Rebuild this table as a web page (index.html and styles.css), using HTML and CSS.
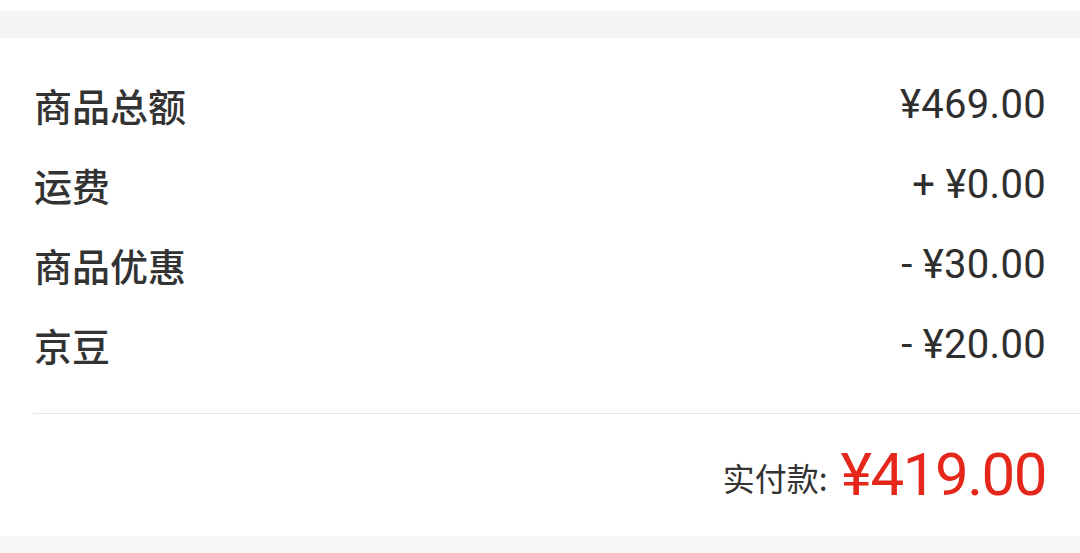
FILE: index.html
```html
<!DOCTYPE html>
<html lang="zh">
<head>
<meta charset="utf-8">
<link rel="stylesheet" href="styles.css">
</head>
<body>
<div class="top-gap"></div>
<div class="band"></div>
<section class="card">
  <div class="rows">
    <div class="row"><span class="label">商品总额</span><span class="value">¥469.00</span></div>
    <div class="row"><span class="label">运费</span><span class="value">+ ¥0.00</span></div>
    <div class="row"><span class="label">商品优惠</span><span class="value">- ¥30.00</span></div>
    <div class="row"><span class="label">京豆</span><span class="value">- ¥20.00</span></div>
  </div>
  <div class="divider"></div>
  <div class="total">
    <span class="total-label">实付款:</span>
    <span class="total-value">¥419.00</span>
  </div>
</section>
<div class="bottom"></div>
</body>
</html>
```

FILE: styles.css
```css
html, body {
  margin: 0;
  padding: 0;
  background: #ffffff;
  font-family: "Noto Sans CJK SC", "Noto Sans", sans-serif;
  color: #333333;
}
.top-gap { height: 11px; background: #ffffff; }
.band { height: 27px; background: #f5f5f5; }
.card {
  background: #ffffff;
  padding-top: 27px;
}
.rows {
  padding: 0 34px 0 34px;
}
.row {
  height: 80px;
  display: flex;
  align-items: center;
  justify-content: space-between;
}
.label {
  font-size: 38px;
  font-weight: 500;
  line-height: 1;
  color: #333333;
}
.value {
  font-family: Roboto, "Noto Sans", sans-serif;
  font-size: 40px;
  font-weight: 400;
  line-height: 1;
  color: #2e2e2e;
  letter-spacing: 0.3px;
}
.divider {
  margin-top: 28px;
  margin-left: 33px;
  height: 1px;
  background: #e6e6e6;
}
.total {
  height: 122px;
  display: flex;
  align-items: center;
  justify-content: flex-end;
  gap: 13px;
  padding-right: 34px;
}
.total-label {
  font-size: 32px;
  color: #333333;
  line-height: 1;
  margin-top: 4px;
}
.total-value {
  font-family: Roboto, "Noto Sans", sans-serif;
  font-size: 60px;
  line-height: 1;
  color: #e4271a;
  letter-spacing: -1.5px;
}
.bottom { height: 20px; background: #f7f7f7; }
```
